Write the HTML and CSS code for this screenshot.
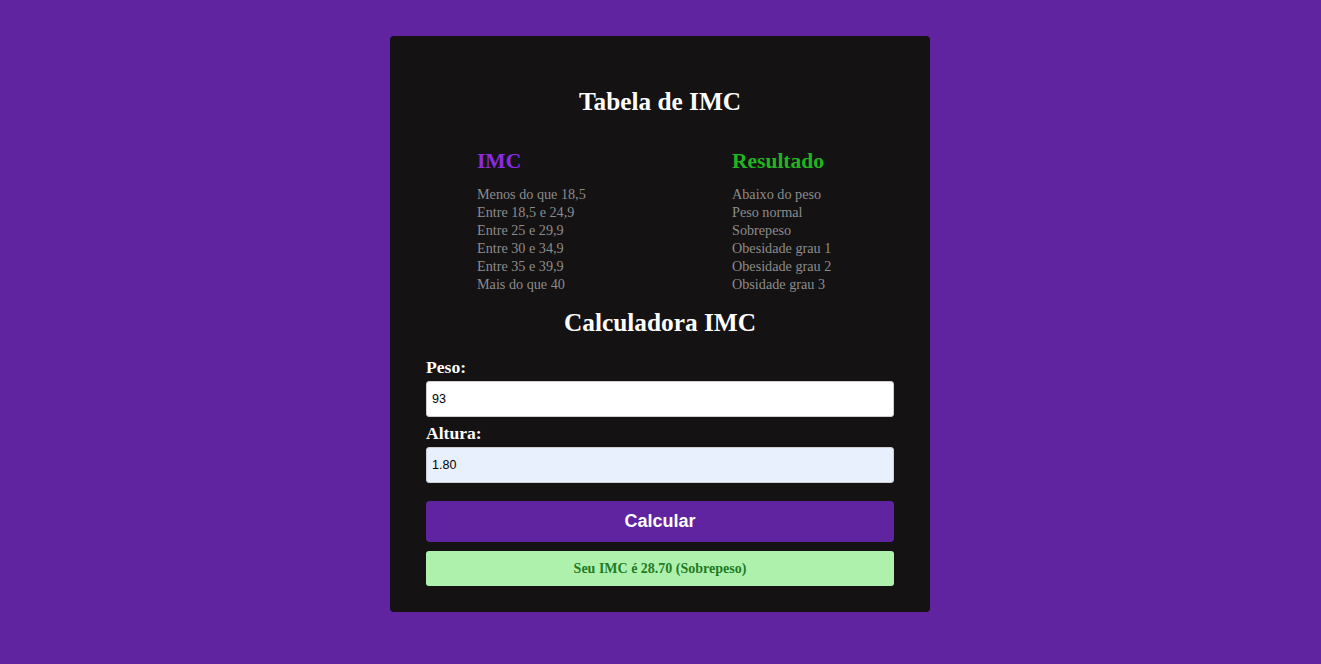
FILE: index.html
```html
<!DOCTYPE html>
<html lang="pt-BR">
<head>
<meta charset="utf-8">
<title>Calculadora IMC</title>
<link rel="stylesheet" href="styles.css">
</head>
<body>
<main class="card">
  <h2 class="title">Tabela de IMC</h2>
  <section class="table">
    <div class="col col-imc">
      <h3 class="col-head head-imc">IMC</h3>
      <ul class="col-list">
        <li>Menos do que 18,5</li>
        <li>Entre 18,5 e 24,9</li>
        <li>Entre 25 e 29,9</li>
        <li>Entre 30 e 34,9</li>
        <li>Entre 35 e 39,9</li>
        <li>Mais do que 40</li>
      </ul>
    </div>
    <div class="col">
      <h3 class="col-head head-res">Resultado</h3>
      <ul class="col-list">
        <li>Abaixo do peso</li>
        <li>Peso normal</li>
        <li>Sobrepeso</li>
        <li>Obesidade grau 1</li>
        <li>Obesidade grau 2</li>
        <li>Obsidade grau 3</li>
      </ul>
    </div>
  </section>
  <h2 class="title title-calc">Calculadora IMC</h2>
  <form class="form">
    <label class="label" for="peso">Peso:</label>
    <input class="field" id="peso" type="text" value="93">
    <label class="label label-altura" for="altura">Altura:</label>
    <input class="field field-auto" id="altura" type="text" value="1.80">
    <button class="btn" type="button">Calcular</button>
    <div class="result">Seu IMC é 28.70 (Sobrepeso)</div>
  </form>
</main>
</body>
</html>
```

FILE: styles.css
```css
html, body {
  margin: 0;
  padding: 0;
}
body {
  background: #6024a1;
  font-family: "Liberation Serif", "Times New Roman", serif;
  min-height: 664px;
  display: flex;
  justify-content: center;
  align-items: flex-start;
  padding-right: 1px;
}
.card {
  margin-top: 36px;
  width: 540px;
  box-sizing: border-box;
  background: #141213;
  border-radius: 4px;
  padding: 50px 36px 26px;
}
.title {
  margin: 0;
  color: #ffffff;
  font-size: 25.3px;
  line-height: 30px;
  font-weight: bold;
  text-align: center;
}
.table {
  display: grid;
  grid-template-columns: 255px auto;
  padding-left: 51px;
  margin-top: 32px;
}
.col-head {
  margin: 0;
  font-size: 21.5px;
  line-height: 26px;
  font-weight: bold;
}
.head-imc { color: #8a2be2; }
.head-res { color: #20b520; }
.col-list {
  list-style: none;
  margin: 11px 0 0;
  padding: 0;
  color: #8c8c8c;
  font-size: 14.2px;
  line-height: 18px;
}
.title-calc {
  margin-top: 14px;
}
.form {
  display: flex;
  flex-direction: column;
  margin-top: 20px;
}
.label {
  color: #ffffff;
  font-weight: bold;
  font-size: 17.6px;
  line-height: 20px;
}
.label-altura {
  margin-top: 6px;
}
.field {
  margin-top: 4px;
  height: 36px;
  box-sizing: border-box;
  border: 1px solid #cfcfcf;
  border-radius: 3px;
  background: #ffffff;
  padding: 0 5px;
  font-family: "Liberation Sans", Arial, sans-serif;
  font-size: 12.5px;
  color: #000000;
  outline: none;
}
.field-auto {
  background: #e8f0fe;
}
.btn {
  margin-top: 18px;
  height: 41px;
  border: none;
  border-radius: 4px;
  background: #6024a1;
  color: #ffffff;
  font-family: "Liberation Sans", Arial, sans-serif;
  font-weight: bold;
  font-size: 18px;
  cursor: pointer;
}
.result {
  margin-top: 9px;
  height: 35px;
  border-radius: 3px;
  background: #aef1ad;
  color: #237a23;
  font-weight: bold;
  font-size: 14px;
  display: flex;
  align-items: center;
  justify-content: center;
}
```
